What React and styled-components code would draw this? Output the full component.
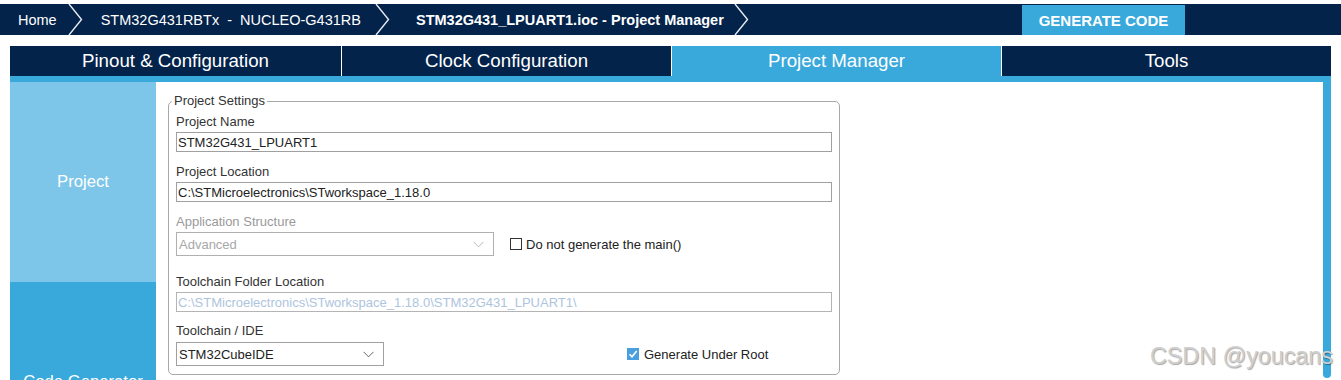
import React from 'react';
import styled, { createGlobalStyle } from 'styled-components';

const GlobalStyle = createGlobalStyle`
  html, body { margin: 0; padding: 0; background: #fff; overflow: hidden; }
  body { font-family: "Liberation Sans", Arial, sans-serif; }
  * { box-sizing: border-box; }
`;

const NAVY = '#03234B';
const BLUE = '#39A9DC';
const LIGHT = '#7DC6E9';

const Page = styled.div`
  position: relative;
  width: 1341px;
  height: 380px;
  overflow: hidden;
  padding-top: 4px;
`;

const TopBar = styled.header`
  display: flex;
  align-items: stretch;
  height: 31px;
  background: ${NAVY};
`;

const Crumb = styled.div`
  display: flex;
  align-items: center;
  padding-left: ${p => p.$pl}px;
  color: #fff;
  font-size: 14.5px;
  font-weight: ${p => (p.$bold ? 700 : 400)};
  white-space: pre;
`;

const ChevronSvg = styled.svg`
  flex: none;
  margin-left: ${p => p.$ml}px;
  display: block;
`;

const Chevron = ({ ml }) => (
  <ChevronSvg $ml={ml} width="15" height="31" viewBox="0 0 15 31">
    <polyline points="1,0 13.5,15.5 1,31" fill="none" stroke="#e8ecf2" strokeWidth="1.4" />
  </ChevronSvg>
);

const GenerateButton = styled.button`
  margin: 1px 156px 0 auto;
  width: 163px;
  border: none;
  background: ${BLUE};
  color: #fff;
  font-family: "Liberation Sans", Arial, sans-serif;
  font-size: 15px;
  font-weight: 700;
  padding: 0;
`;

const Tabs = styled.nav`
  display: grid;
  grid-template-columns: 331px 329px 329px 329px;
  column-gap: 1px;
  margin: 11px 10px 0;
  height: 30px;
  background: #fff;
`;

const Tab = styled.div`
  display: flex;
  align-items: center;
  justify-content: center;
  background: ${p => (p.$active ? BLUE : NAVY)};
  color: #fff;
  font-size: 18.7px;
`;

const Main = styled.main`
  display: flex;
  margin: 0 10px;
  height: 304px;
  border-top: 6px solid ${BLUE};
`;

const Sidebar = styled.aside`
  display: flex;
  flex-direction: column;
  width: 146px;
  flex: none;
`;

const SideItem = styled.div`
  flex: none;
  height: 200px;
  display: flex;
  align-items: center;
  justify-content: center;
  background: ${p => (p.$active ? LIGHT : BLUE)};
  color: #fff;
  font-size: 16.7px;
  white-space: nowrap;
`;

const Content = styled.section`
  flex: 1;
  padding: 11px 0 0 12px;
  background: #fff;
`;

const ScrollTrack = styled.div`
  width: 8px;
  flex: none;
`;

const ScrollThumb = styled.div`
  height: 296px;
  background: ${BLUE};
  border-radius: 0 0 4px 4px;
`;

const Fieldset = styled.fieldset`
  width: 672px;
  margin: 0;
  padding: 0 7px 8px 7px;
  border: 1px solid #a8a8a8;
  border-radius: 5px;
`;

const Legend = styled.legend`
  margin-left: -4px;
  padding: 0 2px;
  font-size: 13px;
  line-height: 16px;
  color: #333;
`;

const Field = styled.div`
  margin-top: ${p => p.$mt}px;
`;

const Label = styled.div`
  font-size: 13px;
  line-height: 16px;
  color: ${p => (p.$disabled ? '#9a9a9a' : '#333')};
  margin-bottom: ${p => p.$mb ?? 2}px;
`;

const TextBox = styled.div`
  width: 656px;
  height: 20px;
  border: 1px solid ${p => (p.$disabled ? '#b4b4b4' : '#a0a0a0')};
  padding: 0 1px;
  display: flex;
  align-items: center;
  font-size: 13px;
  color: ${p => (p.$disabled ? '#aec4de' : '#222')};
  white-space: nowrap;
  overflow: hidden;
`;

const Row = styled.div`
  display: flex;
  align-items: center;
`;

const SelectBox = styled.div`
  width: ${p => p.$w}px;
  height: 24px;
  border: 1px solid ${p => (p.$disabled ? '#b0b0b0' : '#a0a0a0')};
  display: flex;
  align-items: center;
  justify-content: space-between;
  padding: 0 9px 0 2px;
  font-size: 13px;
  color: ${p => (p.$disabled ? '#a8a8a8' : '#222')};
  flex: none;
`;

const Caret = ({ color }) => (
  <svg width="11" height="7" viewBox="0 0 11 7">
    <polyline points="0.5,0.8 5.5,5.8 10.5,0.8" fill="none" stroke={color} strokeWidth="1" />
  </svg>
);

const Check = styled.label`
  display: flex;
  align-items: center;
  gap: ${p => p.$gap ?? 4}px;
  margin-left: ${p => p.$ml}px;
  font-size: 13px;
  color: #222;
  white-space: nowrap;
`;

const Box = styled.span`
  width: 12px;
  height: 12px;
  flex: none;
  display: flex;
  align-items: center;
  justify-content: center;
  border: ${p => (p.$checked ? 'none' : '1px solid #333')};
  background: ${p => (p.$checked ? '#4A9FDE' : '#fff')};
`;

const Watermark = styled.div`
  position: absolute;
  left: 1150px;
  top: 345px;
  font-size: 23.3px;
  line-height: 23px;
  color: #cfcfcf;
  text-shadow: 1px 1px 1px rgba(0, 0, 0, 0.35);
  white-space: nowrap;
  pointer-events: none;
`;

export default function App() {
  return (
    <Page>
      <GlobalStyle />
      <TopBar>
        <Crumb $pl={18}>Home</Crumb>
        <Chevron ml={11} />
        <Crumb $pl={18}>{'STM32G431RBTx  -  NUCLEO-G431RB'}</Crumb>
        <Chevron ml={14} />
        <Crumb $pl={26} $bold>STM32G431_LPUART1.ioc - Project Manager</Crumb>
        <Chevron ml={10} />
        <GenerateButton>GENERATE CODE</GenerateButton>
      </TopBar>
      <Tabs>
        <Tab>Pinout &amp; Configuration</Tab>
        <Tab>Clock Configuration</Tab>
        <Tab $active>Project Manager</Tab>
        <Tab>Tools</Tab>
      </Tabs>
      <Main>
        <Sidebar>
          <SideItem $active>Project</SideItem>
          <SideItem>Code Generator</SideItem>
        </Sidebar>
        <Content>
          <Fieldset>
            <Legend>Project Settings</Legend>
            <Field $mt={5}>
              <Label>Project Name</Label>
              <TextBox>STM32G431_LPUART1</TextBox>
            </Field>
            <Field $mt={12}>
              <Label>Project Location</Label>
              <TextBox>C:\STMicroelectronics\STworkspace_1.18.0</TextBox>
            </Field>
            <Field $mt={12}>
              <Label $disabled>Application Structure</Label>
              <Row>
                <SelectBox $w={318} $disabled>
                  Advanced
                  <Caret color="#b8b8b8" />
                </SelectBox>
                <Check $ml={16}>
                  <Box />
                  Do not generate the main()
                </Check>
              </Row>
            </Field>
            <Field $mt={18}>
              <Label>Toolchain Folder Location</Label>
              <TextBox $disabled>C:\STMicroelectronics\STworkspace_1.18.0\STM32G431_LPUART1\</TextBox>
            </Field>
            <Field $mt={11}>
              <Label $mb={3}>Toolchain / IDE</Label>
              <Row>
                <SelectBox $w={208}>
                  STM32CubeIDE
                  <Caret color="#666" />
                </SelectBox>
                <Check $ml={243} $gap={5}>
                  <Box $checked>
                    <svg width="10" height="10" viewBox="0 0 10 10">
                      <polyline points="1.5,5.2 4,7.8 8.7,2" fill="none" stroke="#fff" strokeWidth="1.6" />
                    </svg>
                  </Box>
                  Generate Under Root
                </Check>
              </Row>
            </Field>
          </Fieldset>
        </Content>
        <ScrollTrack>
          <ScrollThumb />
        </ScrollTrack>
      </Main>
      <Watermark>CSDN @youcans</Watermark>
    </Page>
  );
}
